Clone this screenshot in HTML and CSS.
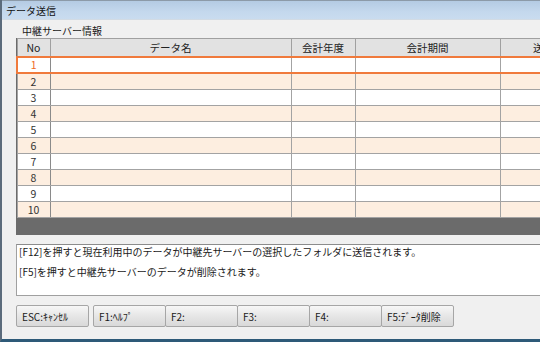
FILE: index.html
```html
<!DOCTYPE html>
<html lang="ja">

<head>
  <meta charset="UTF-8" />
  <title>データ送信</title>
  <link rel="stylesheet" href="styles.css">
</head>

<body>
  <div class="window">
    <div class="titlebar">データ送信</div>

    <div class="content">
      <div class="group-label">中継サーバー情報</div>

      <!-- server data grid -->
      <div class="grid-wrap">
        <table class="grid">
          <colgroup>
            <col class="c-no">
            <col class="c-name">
            <col class="c-year">
            <col class="c-period">
            <col class="c-send">
          </colgroup>
          <thead>
            <tr>
              <th>No</th>
              <th>データ名</th>
              <th>会計年度</th>
              <th>会計期間</th>
              <th>送信日時</th>
            </tr>
          </thead>
          <tbody>
            <tr class="selected"><td>1</td><td></td><td></td><td></td><td></td></tr>
            <tr><td>2</td><td></td><td></td><td></td><td></td></tr>
            <tr><td>3</td><td></td><td></td><td></td><td></td></tr>
            <tr><td>4</td><td></td><td></td><td></td><td></td></tr>
            <tr><td>5</td><td></td><td></td><td></td><td></td></tr>
            <tr><td>6</td><td></td><td></td><td></td><td></td></tr>
            <tr><td>7</td><td></td><td></td><td></td><td></td></tr>
            <tr><td>8</td><td></td><td></td><td></td><td></td></tr>
            <tr><td>9</td><td></td><td></td><td></td><td></td></tr>
            <tr><td>10</td><td></td><td></td><td></td><td></td></tr>
          </tbody>
        </table>
      </div>

      <div class="message">
        <div class="line">[F12]を押すと現在利用中のデータが中継先サーバーの選択したフォルダに送信されます。</div>
        <div class="line">[F5]を押すと中継先サーバーのデータが削除されます。</div>
      </div>

      <div class="fkeys">
        <button class="fkey esc">ESC:ｷｬﾝｾﾙ</button>
        <button class="fkey">F1:ﾍﾙﾌﾟ</button>
        <button class="fkey">F2:</button>
        <button class="fkey">F3:</button>
        <button class="fkey">F4:</button>
        <button class="fkey">F5:ﾃﾞｰﾀ削除</button>
      </div>
    </div>
  </div>
</body>

</html>
```

FILE: styles.css
```css
body {
  margin: 0;
  width: 540px;
  height: 342px;
  overflow: hidden;
  font-family: "Noto Sans CJK JP", "Liberation Sans", sans-serif;
  font-size: 10px;
  color: #1a1a1a;
  background-color: #f0f0f0;
}

.window {
  height: 342px;
  box-sizing: border-box;
  border-left: 2px solid #5b6b7c;
  border-bottom: 3px solid #2e5a78;
  background-color: #f0f0f0;
}

.titlebar {
  height: 20px;
  box-sizing: border-box;
  padding-left: 4px;
  line-height: 19px;
  font-size: 10px;
  color: #111;
  border-top: 1px solid #8c9aa8;
  border-bottom: 1px solid #d2dbe4;
  background: linear-gradient(#b4cbe3, #c4d8ed 60%, #c9dcef);
}

.content {
  padding-left: 14px;
}

.group-label {
  height: 18px;
  box-sizing: border-box;
  padding: 4px 0 0 6px;
  line-height: 14px;
}

/* grid */

.grid-wrap {
  height: 197px;
  overflow: hidden;
  background-color: #6b6b6b;
}

.grid {
  border-collapse: collapse;
  table-layout: fixed;
  width: 591px;
}

.c-no { width: 33px; }
.c-name { width: 241px; }
.c-year { width: 64px; }
.c-period { width: 145px; }
.c-send { width: 108px; }

.grid th {
  height: 17px;
  padding: 0;
  font-weight: normal;
  font-size: 10.5px;
  line-height: 16px;
  background-color: #e2e2e2;
  border: 1px solid #a0a0a0;
  color: #222;
}

.grid td {
  height: 15px;
  padding: 0;
  line-height: 14px;
  font-size: 10.5px;
  border: 1px solid #a3a3a3;
  background-color: #fff;
}

.grid td:first-child {
  text-align: center;
  color: #333;
  border-right-color: #8a8a8a;
}

.grid tbody tr:nth-child(even) td {
  background-color: #fdeee0;
}

.grid tr.selected td {
  height: 13px;
  border-top: 2px solid #f07a3c;
  border-bottom: 2px solid #f07a3c;
}

.grid tr.selected td:first-child {
  border-left: 2px solid #f07a3c;
  color: #ef6a24;
}

/* message box */

.message {
  margin-top: 9px;
  height: 52px;
  box-sizing: border-box;
  padding-left: 2px;
  background-color: #fff;
  border: 1px solid #a0a0a0;
  border-top-color: #8c8c8c;
  border-right: none;
  white-space: nowrap;
}

.message .line {
  height: 20px;
  line-height: 14px;
}

/* function keys */

.fkeys {
  display: flex;
  margin-top: 9px;
}

.fkey {
  width: 73px;
  height: 22px;
  margin-left: -1px;
  padding: 0 5px;
  text-align: left;
  font-family: "Noto Sans CJK JP", "Liberation Sans", sans-serif;
  font-size: 10px;
  color: #1a1a1a;
  background: linear-gradient(#f7f7f7, #e6e6e6 50%, #d9d9d9);
  border: 1px solid #a6a6a6;
  border-radius: 2px;
}

.fkey.esc {
  margin-left: 0;
  margin-right: 5px;
}
```
